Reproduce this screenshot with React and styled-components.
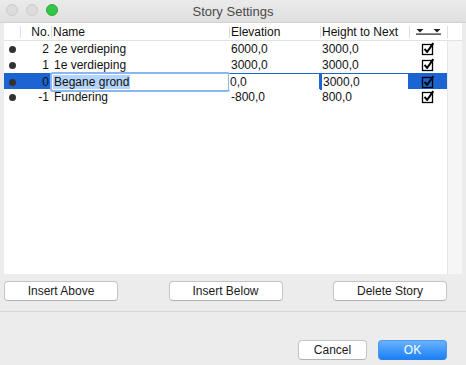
import styled, { createGlobalStyle } from "styled-components";

const GlobalStyle = createGlobalStyle`
html, body {
  margin: 0;
  padding: 0;
  background: #ececec;
}
body {
  font-family: "Liberation Sans", Arial, sans-serif;
  font-size: 12px;
  color: #111;
}
`

const stories = [
    { no: 2, name: "2e verdieping", elevation: "6000,0", height: "3000,0" },
    { no: 1, name: "1e verdieping", elevation: "3000,0", height: "3000,0" },
    { no: 0, name: "Begane grond", elevation: "0,0", height: "3000,0", selected: true },
    { no: -1, name: "Fundering", elevation: "-800,0", height: "800,0" },
];

const COLS = "16px 31px 178px 91px 89px 38px";

function CheckIcon() {
    return (
        <svg width="14" height="14" viewBox="0 0 14 14">
            <rect x="1.5" y="2.5" width="10" height="10" fill="none" stroke="#000" strokeWidth="1.3" />
            <path d="M3.6 6.8 L6.1 10 L12.3 1.2" fill="none" stroke="#000" strokeWidth="2" strokeLinejoin="round" />
        </svg>
    )
}

function SortIcon() {
    return (
        <svg width="26" height="7" viewBox="0 0 26 7">
            <path d="M0.5 1 L7.5 1 L4 4.5 Z" fill="#222" />
            <path d="M17.5 1 L24.5 1 L21 4.5 Z" fill="#222" />
            <rect x="0" y="5.5" width="25" height="1.2" fill="#222" />
        </svg>
    )
}

function App() {
    return (
        <>
            <GlobalStyle />
            <Window>
                <TitleBar>
                    <Lights>
                        <Light />
                        <Light />
                        <Light green />
                    </Lights>
                    <Title>Story Settings</Title>
                </TitleBar>

                <Content>
                    <Table>
                        <HeaderRow>
                            <HeaderCell />
                            <HeaderCell line align="right">No.</HeaderCell>
                            <HeaderCell line>Name</HeaderCell>
                            <HeaderCell line>Elevation</HeaderCell>
                            <HeaderCell line>Height to Next</HeaderCell>
                            <HeaderCell line align="center"><SortIcon /></HeaderCell>
                            <HeaderCell line />
                        </HeaderRow>
                        <TableBody>
                            <Rows>
                                {stories.map((s) => (
                                    <Row key={s.no} selected={s.selected}>
                                        <Cell align="center"><Bullet /></Cell>
                                        <Cell align="right">{s.no}</Cell>
                                        {s.selected ? (
                                            <EditField><Selection>{s.name}</Selection></EditField>
                                        ) : (
                                            <Cell>{s.name}</Cell>
                                        )}
                                        <ValueCell selected={s.selected}>{s.elevation}</ValueCell>
                                        <ValueCell selected={s.selected} focus={s.selected}>{s.height}</ValueCell>
                                        <Cell align="center"><CheckIcon /></Cell>
                                    </Row>
                                ))}
                            </Rows>
                            <Track />
                        </TableBody>
                    </Table>

                    <ActionRow>
                        <Button>Insert Above</Button>
                        <Button>Insert Below</Button>
                        <Button>Delete Story</Button>
                    </ActionRow>
                </Content>

                <Divider />

                <Footer>
                    <Button small>Cancel</Button>
                    <Button small primary>OK</Button>
                </Footer>
            </Window>
        </>
    )
}

const Window = styled.div`
width: 466px;
height: 365px;
display: flex;
flex-direction: column;
background: #ececec;
overflow: hidden;
`
const TitleBar = styled.div`
position: relative;
height: 22px;
flex-shrink: 0;
display: flex;
align-items: center;
justify-content: center;
background: linear-gradient(#ebebeb, #e0e0e0);
border-bottom: 1px solid #d1d1d1;
`
const Lights = styled.div`
position: absolute;
left: 6px;
top: 4px;
display: flex;
gap: 8px;
`
const Light = styled.span`
width: 12px;
height: 12px;
box-sizing: border-box;
border-radius: 50%;
background: ${({ green }) => (green ? "#33c748" : "#dcdcdc")};
border: 1px solid ${({ green }) => (green ? "#2aad3b" : "#cbcbcb")};
`
const Title = styled.div`
font-size: 13px;
color: #4a4a4a;
`
const Content = styled.div`
padding: 0 4px;
`
const Table = styled.div`
height: 251px;
background: #fff;
display: flex;
flex-direction: column;
`
const HeaderRow = styled.div`
height: 17px;
display: grid;
grid-template-columns: ${COLS} 15px;
align-items: center;
border-bottom: 1px solid #e2e2e2;
flex-shrink: 0;
`
const HeaderCell = styled.div`
height: 12px;
line-height: 12px;
box-sizing: border-box;
border-left: ${({ line }) => (line ? "1px solid #dedede" : "none")};
padding: 0 1px;
text-align: ${({ align }) => align || "left"};
color: #111;
white-space: nowrap;
display: ${({ align }) => (align === "center" ? "flex" : "block")};
justify-content: center;
align-items: center;
`
const TableBody = styled.div`
flex: 1;
display: flex;
`
const Rows = styled.div`
width: 443px;
`
const Track = styled.div`
flex: 1;
background: #f6f6f6;
border-left: 1px solid #e6e6e6;
`
const Row = styled.div`
height: 16px;
display: grid;
grid-template-columns: ${COLS};
align-items: stretch;
background: ${({ selected }) => (selected ? "#1b64d1" : "#fff")};
`
const Cell = styled.div`
display: flex;
align-items: center;
justify-content: ${({ align }) =>
        align === "right" ? "flex-end" : align === "center" ? "center" : "flex-start"};
padding: ${({ align }) => (align === "right" ? "0 2px 0 0" : align === "center" ? "0" : "0 0 0 3px")};
white-space: nowrap;
line-height: 16px;
`
const ValueCell = styled(Cell)`
background: ${({ selected }) => (selected ? "#fff" : "transparent")};
margin: ${({ selected }) => (selected ? "1px 1px 1px 0" : "0")};
border-left: ${({ focus }) => (focus ? "2px solid #1b64d1" : "none")};
padding-left: ${({ selected }) => (selected ? "1px" : "2px")};
`
const EditField = styled.div`
display: flex;
align-items: center;
background: #fff;
margin: 1px;
padding-left: 1px;
box-shadow: 0 0 0 2px #8ab6f2;
border-radius: 1px;
white-space: nowrap;
`
const Selection = styled.span`
background: #b3d4fc;
line-height: 14px;
padding: 0 1px;
`
const Bullet = styled.span`
width: 7px;
height: 7px;
border-radius: 50%;
background: #333;
`
const ActionRow = styled.div`
width: 443px;
display: flex;
justify-content: space-between;
margin-top: 7px;
`
const Button = styled.button`
width: ${({ small }) => (small ? "69px" : "114px")};
height: 20px;
box-sizing: border-box;
font-family: "Liberation Sans", Arial, sans-serif;
font-size: 12px;
color: ${({ primary }) => (primary ? "#fff" : "#1a1a1a")};
background: ${({ primary }) => (primary ? "linear-gradient(#6ab2fb, #1a80f7)" : "#fff")};
border: 1px solid ${({ primary }) => (primary ? "#4b98f3" : "#c4c4c4")};
border-bottom-color: ${({ primary }) => (primary ? "#2a7fe8" : "#b2b2b2")};
border-radius: 4px;
padding: 0;
`
const Divider = styled.div`
height: 1px;
background: #d6d6d6;
margin-top: 10px;
`
const Footer = styled.div`
display: flex;
justify-content: flex-end;
gap: 11px;
padding-right: 19px;
margin-top: 28px;
`

export default App;
